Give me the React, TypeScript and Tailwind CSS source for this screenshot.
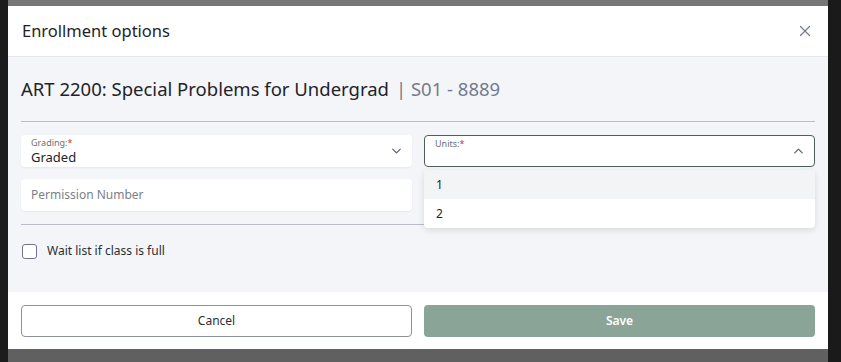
import { ChevronDown, ChevronUp, X } from 'lucide-react';

const font = { fontFamily: '"Noto Sans", "Open Sans", sans-serif' };

function SelectBox({
  label,
  value,
  open,
}: {
  label: string;
  value?: string;
  open?: boolean;
}) {
  return (
    <div
      className={`relative h-[32px] rounded-[4px] bg-white pl-[10px] pr-[10px] ${
        open ? 'border border-[#4d5f58]' : 'shadow-[0_1px_2px_rgba(0,0,0,0.06)]'
      }`}
    >
      <div className="pt-[2px] text-[9px] leading-[12px] text-[#6b6f78]">
        {label}
        <span className="text-[#c0392b]">*</span>
      </div>
      {value && <div className="text-[13px] leading-[16px] text-[#1f2328]">{value}</div>}
      {open ? (
        <ChevronUp
          className="absolute right-[8px] top-1/2 -translate-y-1/2 text-[#5c6270]"
          size={15}
          strokeWidth={2}
        />
      ) : (
        <ChevronDown
          className="absolute right-[8px] top-1/2 -translate-y-1/2 text-[#5c6270]"
          size={15}
          strokeWidth={2}
        />
      )}
    </div>
  );
}

export default function App() {
  return (
    <div className="flex h-[362px] w-[841px] overflow-hidden bg-[#1b1b1b]" style={font}>
      <div className="w-[8px] shrink-0 bg-[#1c1c1c]" />
      <div className="flex w-[820px] shrink-0 flex-col bg-gradient-to-b from-[#777777] to-[#606060] pt-[6px]">
        <div className="flex h-[343px] flex-col bg-white">
          {/* header */}
          <div className="flex h-[51px] items-center justify-between border-b border-[#e4e6ec] pl-[14px] pr-[14px]">
            <h2 className="text-[16.5px] font-normal text-[#1f2328]">Enrollment options</h2>
            <X size={18} strokeWidth={1.6} className="text-[#737a92]" />
          </div>

          {/* body */}
          <div className="relative flex-1 bg-[#f4f5f9] px-[13px]">
            <div className="flex h-[64px] items-center text-[18.5px] text-[#1f2328]">
              ART 2200: Special Problems for Undergrad
              <span className="ml-[7px] text-[#757b8c]">| S01 - 8889</span>
            </div>
            <div className="border-t border-[#b9bdc9]" />

            <div className="mt-[13px] grid grid-cols-2 gap-x-[12px]">
              <div className="flex flex-col gap-[12px]">
                <SelectBox label="Grading:" value="Graded" />
                <div className="flex h-[32px] items-center rounded-[4px] bg-white px-[10px] text-[12px] text-[#7a7f8a] shadow-[0_1px_2px_rgba(0,0,0,0.06)]">
                  Permission Number
                </div>
              </div>
              <div className="relative">
                <SelectBox label="Units:" open />
                <div className="absolute left-0 right-0 top-[35px] z-10 overflow-hidden rounded-[4px] bg-white shadow-[0_2px_6px_rgba(0,0,0,0.12)]">
                  <div className="flex h-[29px] items-center bg-[#f3f4f6] px-[12px] text-[12px] text-[#1f2328]">1</div>
                  <div className="flex h-[29px] items-center px-[12px] text-[12px] text-[#1f2328]">2</div>
                </div>
              </div>
            </div>

            <div className="mt-[13px] border-t border-[#b9bdc9]" />

            <label className="mt-[17px] flex items-center gap-[10px] pl-[1px]">
              <span className="h-[15px] w-[15px] rounded-[3px] border-[1.5px] border-[#6f7391] bg-white" />
              <span className="text-[12px] text-[#2a2e35]">Wait list if class is full</span>
            </label>
          </div>

          {/* footer */}
          <div className="grid h-[57px] grid-cols-2 items-center gap-x-[12px] px-[13px]">
            <button className="h-[32px] rounded-[4px] border border-[#8d929c] bg-white text-[12px] text-[#2a2e35]">
              Cancel
            </button>
            <button className="h-[32px] rounded-[4px] bg-[#8aa598] text-[12px] font-semibold text-white">
              Save
            </button>
          </div>
        </div>
      </div>
      <div className="w-[13px] shrink-0 bg-[#1a1a1a]" />
    </div>
  );
}
